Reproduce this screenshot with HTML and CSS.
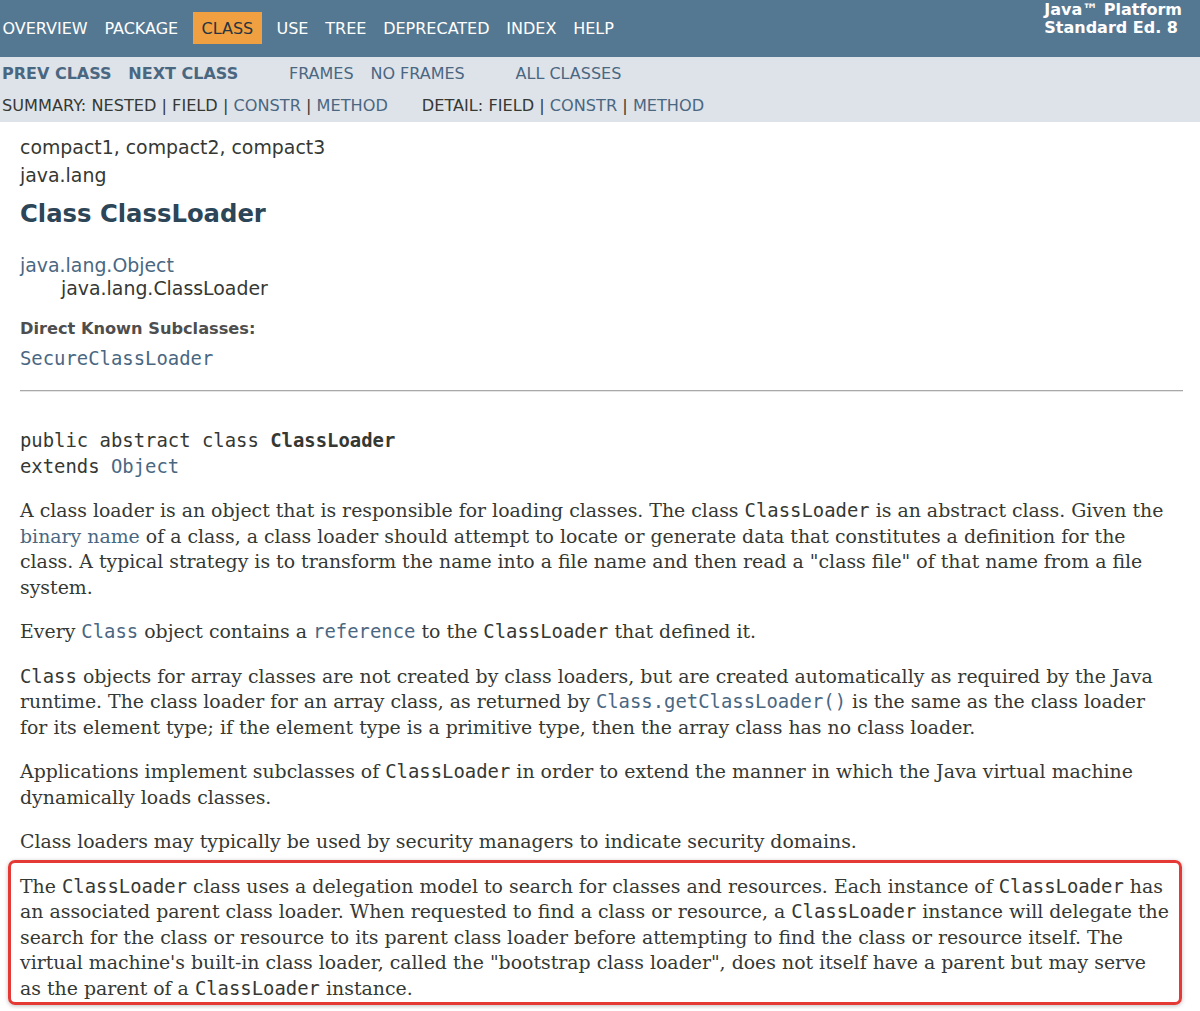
FILE: index.html
```html
<!DOCTYPE html>
<html lang="en">
<head>
<meta charset="utf-8">
<title>ClassLoader (Java Platform SE 8)</title>
<link rel="stylesheet" href="styles.css">
</head>
<body>
<header class="topnav">
  <ul class="navlist">
    <li>Overview</li>
    <li>Package</li>
    <li class="current">Class</li>
    <li>Use</li>
    <li>Tree</li>
    <li>Deprecated</li>
    <li>Index</li>
    <li>Help</li>
  </ul>
  <div class="about"><strong>Java™ Platform<br>Standard Ed. 8</strong></div>
</header>
<nav class="subnav">
  <div class="subnav-row">
    <ul class="navlist first">
      <li><a href="#" class="strong">Prev Class</a></li>
      <li><a href="#" class="strong">Next Class</a></li>
    </ul>
    <ul class="navlist">
      <li><a href="#">Frames</a></li>
      <li><a href="#">No Frames</a></li>
    </ul>
    <ul class="navlist">
      <li><a href="#">All Classes</a></li>
    </ul>
  </div>
  <div class="subnav-row second">
    <span class="subnavlist">Summary:&nbsp;Nested&nbsp;|&nbsp;Field&nbsp;|&nbsp;<a href="#">Constr</a>&nbsp;|&nbsp;<a href="#">Method</a></span>
    <span class="subnavlist">Detail:&nbsp;Field&nbsp;|&nbsp;<a href="#">Constr</a>&nbsp;|&nbsp;<a href="#">Method</a></span>
  </div>
</nav>
<main class="content">
  <div class="header">
    <div class="subtitle">compact1, compact2, compact3</div>
    <div class="subtitle pkg">java.lang</div>
    <h2 class="title">Class ClassLoader</h2>
  </div>
  <ul class="inheritance">
    <li><a href="#">java.lang.Object</a></li>
    <li>
      <ul class="inheritance nested">
        <li>java.lang.ClassLoader</li>
      </ul>
    </li>
  </ul>
  <dl class="subclasses">
    <dt>Direct Known Subclasses:</dt>
    <dd><a href="#" class="code">SecureClassLoader</a></dd>
  </dl>
  <hr class="rule">
  <pre class="signature">public abstract class <span class="bold">ClassLoader</span>
extends <a href="#">Object</a></pre>
  <div class="block">
    <p>A class loader is an object that is responsible for loading classes. The class <code>ClassLoader</code> is an abstract class. Given the <a href="#">binary name</a> of a class, a class loader should attempt to locate or generate data that constitutes a definition for the class. A typical strategy is to transform the name into a file name and then read a "class file" of that name from a file system.</p>
    <p>Every <a href="#"><code>Class</code></a> object contains a <a href="#"><code>reference</code></a> to the <code>ClassLoader</code> that defined it.</p>
    <p><code>Class</code> objects for array classes are not created by class loaders, but are created automatically as required by the Java runtime. The class loader for an array class, as returned by <a href="#"><code>Class.getClassLoader()</code></a> is the same as the class loader for its element type; if the element type is a primitive type, then the array class has no class loader.</p>
    <p>Applications implement subclasses of <code>ClassLoader</code> in order to extend the manner in which the Java virtual machine dynamically loads classes.</p>
    <p>Class loaders may typically be used by security managers to indicate security domains.</p>
    <p class="highlight">The <code>ClassLoader</code> class uses a delegation model to search for classes and resources. Each instance of <code>ClassLoader</code> has an associated parent class loader. When requested to find a class or resource, a <code>ClassLoader</code> instance will delegate the search for the class or resource to its parent class loader before attempting to find the class or resource itself. The virtual machine's built-in class loader, called the "bootstrap class loader", does not itself have a parent but may serve as the parent of a <code>ClassLoader</code> instance.</p>
  </div>
</main>
</body>
</html>
```
FILE: styles.css
```css
html {
  overflow: hidden;
}
html, body {
  margin: 0;
  padding: 0;
}
body {
  background: #ffffff;
  color: #353833;
  font-family: "DejaVu Sans", "Liberation Sans", sans-serif;
  font-size: 18.9px;
}
a {
  color: #4a6782;
  text-decoration: none;
}

/* top navigation */
.topnav {
  display: flex;
  justify-content: space-between;
  align-items: flex-start;
  height: 57px;
  background: #557892;
  color: #ffffff;
  overflow: hidden;
}
.navlist {
  display: flex;
  list-style: none;
  margin: 0 34px 0 0;
  padding: 0;
}
.topnav .navlist {
  margin-left: -6px;
  padding-top: 12px;
}
.navlist li {
  padding: 6.5px 8.4px;
  font-size: 16px;
  line-height: 19px;
  text-transform: uppercase;
}
.navlist li.current {
  margin: 0 6.5px;
  background: #f0a040;
  color: #253441;
}
.about {
  padding: 1px 18px 0 0;
  font-size: 16px;
  line-height: 18px;
  white-space: nowrap;
}

/* sub navigation */
.subnav {
  background: #dee3e9;
  height: 65px;
  overflow: hidden;
}
.subnav-row {
  display: flex;
}
.subnav .navlist.first {
  margin-left: -6.4px;
}
.subnav a.strong {
  font-weight: bold;
}
.subnav-row.second {
  padding: 7px 0 7px 2px;
  font-size: 16.15px;
  line-height: 19px;
  text-transform: uppercase;
  gap: 34px;
}

/* content */
.content {
  padding: 0 17px 8px 20px;
}
.header {
  padding-top: 14px;
}
.subtitle {
  line-height: 22px;
}
.subtitle.pkg {
  margin-top: 6px;
}
.title {
  margin: 14px 0 0;
  font-size: 24.3px;
  line-height: 28px;
  color: #2c4557;
  font-weight: bold;
}
.inheritance {
  list-style: none;
  margin: 26px 0 0;
  padding: 0;
  line-height: 22px;
}
.inheritance.nested {
  margin: 0 0 0 41px;
  padding-top: 1px;
}
.subclasses {
  margin: 20px 0 0;
}
.subclasses dt {
  font-size: 16.2px;
  line-height: 19px;
  font-weight: bold;
  color: #4e4e4e;
}
.subclasses dd {
  margin: 9px 0 0;
  line-height: 22px;
}
.code, code, .signature {
  font-family: "DejaVu Sans Mono", "Liberation Mono", monospace;
  font-size: 18.9px;
}
.rule {
  margin: 21px 0 0;
  height: 0;
  border: 0;
  border-top: 1px solid #a9a9a9;
  border-bottom: 1px solid #e6e6e6;
}
.signature {
  margin: 35px 0 0;
  line-height: 26px;
}
.bold {
  font-weight: bold;
}
.block {
  font-family: "DejaVu Serif", "Liberation Serif", serif;
  font-size: 18.9px;
  line-height: 25.5px;
  padding: 19px 13px 0 0;
}
.block p {
  margin: 0 0 19px;
}
.block code {
  line-height: 20px;
}
.block p.highlight {
  position: relative;
  margin-bottom: 0;
}
.highlight::before {
  content: "";
  position: absolute;
  top: -14px;
  right: -12px;
  bottom: -4px;
  left: -12px;
  border: 3px solid #e53935;
  border-radius: 7px;
  box-shadow: 0 1px 4px rgba(0, 0, 0, 0.25);
  pointer-events: none;
}
```
